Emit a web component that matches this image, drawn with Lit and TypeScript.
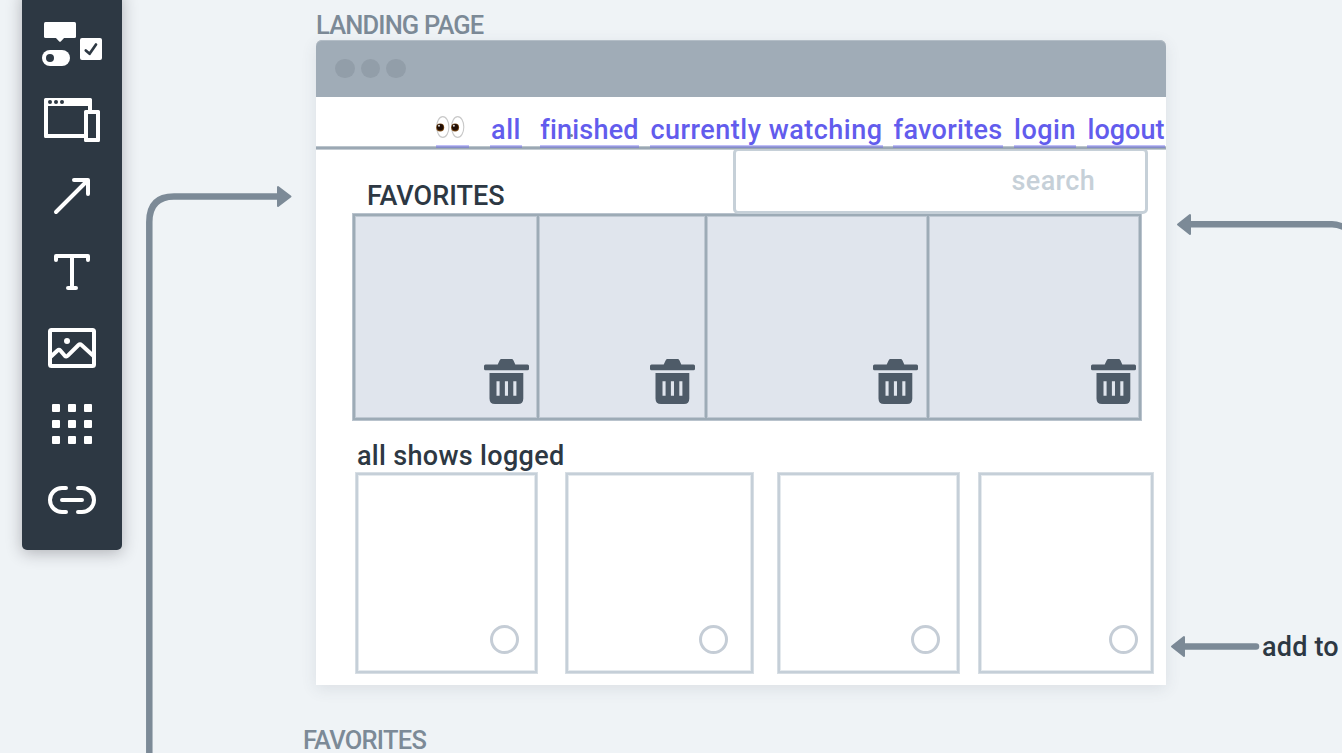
import { LitElement, html, css, svg } from "lit";
import { customElement } from "lit/decorators.js";

const toolIcons = [
  svg`<g fill="#fff"><rect x="44" y="22" width="32" height="16" rx="1.5"/><path d="M55 37H65L61 41.2Q60 42.2 59 41.2Z"/><rect x="42" y="50" width="28" height="16" rx="8"/><rect x="80" y="38" width="22" height="22" rx="2"/></g><circle cx="50" cy="58" r="4" fill="#2d3843"/><path d="M85.8 50.5L89.6 53.8L96 44.5" fill="none" stroke="#2d3843" stroke-width="2.7" stroke-linecap="round" stroke-linejoin="round"/>`,
  svg`<path fill="#fff" fill-rule="evenodd" d="M45.5 98H90.5Q92 98 92 99.5V110H98.5Q100 110 100 111.5V140.5Q100 142 98.5 142H85.5Q84 142 84 140.5V138H45.5Q44 138 44 136.5V99.5Q44 98 45.5 98ZM48 106V134H84V111.5Q84 110 85.5 110H88V106ZM88 114V138H96V114Z"/><g fill="#2d3843"><circle cx="50" cy="102" r="2"/><circle cx="56" cy="102" r="2"/><circle cx="62" cy="102" r="2"/></g>`,
  svg`<path class="line" d="M56 212L87.5 180.5M74 180H88V194"/>`,
  svg`<path class="line" d="M56 260V256H88V260M72 256V288M68 288H76"/>`,
  svg`<rect class="line" x="50" y="330" width="44" height="36" rx="1.5"/><circle cx="67" cy="341" r="3" fill="#fff"/><path class="line" d="M50.5 357L57.5 350.5Q59 349.2 60.5 350.7L64.8 355.8Q66.2 357.3 67.8 355.7L78.5 345Q80 343.5 81.5 345L93.5 356"/>`,
  svg`<g fill="#fff">${[404, 420, 436].map((y) => [52, 68, 84].map((x) => svg`<rect x=${x} y=${y} width="8" height="8" rx="1"/>`))}</g>`,
  svg`<path class="line" d="M66 488H62A12 12 0 0 0 62 512H66M78 488H82A12 12 0 0 1 82 512H78M62 500H82"/>`,
];

const trash = html`<svg width="45" height="45" viewBox="0 0 45 45">
  <path fill="#4e5b68" fill-rule="evenodd" d="M13.7 5.4L15.6 1.4Q16.2 0 17.6 0H27.5Q28.9 0 29.5 1.4L31.3 5.4H43.5Q45 5.4 45 6.9V9.800Q45 11.3 43.5 11.3H1.5Q0 11.3 0 9.8V6.9Q0 5.4 1.5 5.4ZM5.5 14H39.3V39.5Q39.3 45 34 45H11Q5.5 45 5.5 39.5ZM12.5 22.2V36.8H15.6V22.2ZM20.9 22.2V36.8H24V22.2ZM29.3 22.2V36.8H32.4V22.2Z"/>
</svg>`;

@customElement("app-root")
export class AppRoot extends LitElement {
  static styles = css`
    :host {
      display: block;
      position: relative;
      width: 1342px;
      height: 753px;
      overflow: hidden;
      background: #eff3f6;
      font: 500 27px/32px Roboto, sans-serif;
      color: #2d3843;
      white-space: nowrap;
    }
    * { box-sizing: border-box; }
    svg { display: block; flex: none; }
    .tools {
      position: absolute;
      left: 22px;
      top: -10px;
      width: 100px;
      height: 560px;
      padding-top: 16px;
      display: flex;
      flex-direction: column;
      align-items: center;
      background: #2d3843;
      border-radius: 5px;
      box-shadow: 0 3px 16px rgba(45, 40, 50, 0.32);
    }
    .line { fill: none; stroke: #fff; stroke-width: 4; stroke-linecap: round; stroke-linejoin: round; }
    .wires { position: absolute; inset: 0; }
    .note { position: absolute; }
    .frame-name { color: #7c8a97; font-size: 25.5px; line-height: 26px; }
    .landing { left: 316px; top: 12px; letter-spacing: -0.85px; }
    .next { left: 303px; top: 727px; letter-spacing: -0.75px; }
    .add { left: 1262px; top: 631px; letter-spacing: 0.2px; }
    .page {
      position: absolute;
      left: 316px;
      top: 40px;
      width: 850px;
      height: 645px;
      background: #fff;
      border-radius: 6px 6px 0 0;
      box-shadow: 0 4px 16px rgba(60, 75, 90, 0.11);
    }
    .bar {
      height: 57px;
      padding: 0 19px;
      display: flex;
      align-items: center;
      gap: 6px;
      background: #a0acb7;
      border-radius: 6px 6px 0 0;
      box-shadow: inset 0 1px #b3bdc6;
    }
    .bar i { width: 19.5px; height: 19.5px; border-radius: 50%; background: #929ea9; }
    nav {
      position: relative;
      z-index: 1;
      height: 53px;
      padding-left: 120px;
      display: flex;
      background: linear-gradient(#bac4cc 0 1px, #9ba8b3 1px 3px, #c3cbd2 3px) bottom / 100% 4px no-repeat;
    }
    nav a {
      height: 51px;
      padding-top: 17px;
      display: flex;
      justify-content: center;
      color: #625ced;
      border-bottom: 3px solid rgba(98, 92, 237, 0.4);
    }
    .eyes { width: 33px; margin-right: 21px; }
    .all { width: 32px; margin-right: 18px; letter-spacing: 0.5px; }
    .finished { width: 99px; margin-right: 11px; letter-spacing: 0.2px; }
    .watching { width: 233px; margin-right: 10px; letter-spacing: 0.5px; }
    .favs { width: 110px; margin-right: 11px; letter-spacing: 0.3px; }
    .login { width: 62px; margin-right: 11px; letter-spacing: 0.5px; }
    .logout { width: 78px; }
    .head { height: 63px; display: flex; }
    h2, h3 { font: inherit; margin: 0; }
    h2 { margin: 30px 0 0 51px; width: 140px; }
    .search {
      width: 415px;
      height: 66px;
      margin: -2px 0 0 226px;
      padding: 14px 50px 0 0;
      border: 3px solid #c6d0d8;
      border-radius: 5px;
      background: #fff;
      color: #c6d0d8;
      text-align: right;
      letter-spacing: 0.35px;
    }
    .favorites {
      margin-left: 36px;
      width: 790px;
      height: 208px;
      display: grid;
      grid-template-columns: 188px 168px 222px 212px;
      background: #e0e5ed;
      box-shadow: inset 0 0 0 1px #b9c3cd, inset 0 0 0 3px #9dabb6, inset 0 0 0 4px #bfc8d2;
    }
    .cell {
      margin: 3px 0;
      display: flex;
      justify-content: flex-end;
      align-items: flex-end;
      padding: 0 11px 14px 0;
      box-shadow: inset -1px 0 #bfc8d2, inset -3px 0 #9dabb6, inset -4px 0 #bfc8d2;
    }
    .cell:nth-child(2) { padding-right: 13px; }
    .cell:nth-child(3) { padding-right: 12px; }
    .cell:nth-child(4) { padding-right: 6px; box-shadow: none; }
    h3 { padding: 19px 0 0 41px; height: 51px; letter-spacing: 0.32px; }
    .shows { margin-left: 39px; height: 202px; display: flex; }
    .show {
      display: flex;
      justify-content: flex-end;
      align-items: flex-end;
      padding-bottom: 20px;
      box-shadow: inset 0 0 0 1px #d7dee4, inset 0 0 0 3px #c5cfd8, inset 0 0 0 4px #e5eaee;
    }
    .show i { width: 29px; height: 29px; border: 3px solid #c5cdd6; border-radius: 50%; }
    .one { width: 183px; margin-right: 27px; padding-right: 19px; }
    .two { width: 189px; margin-right: 23px; padding-right: 26px; }
    .three { width: 183px; margin-right: 18px; padding-right: 20px; }
    .four { width: 176px; padding-right: 16px; }
    .dot { position: absolute; left: 570px; top: 134px; width: 3px; height: 3px; border-radius: 50%; background: #7c8a97; }
  `;

  render() {
    return html`
      <svg class="wires" width="1342" height="753" viewBox="0 0 1342 753">
        <g fill="none" stroke="#7c8a97" stroke-width="6.5">
          <path d="M149.3 756V222Q149.3 196.5 174 196.5H279"/>
          <path d="M1188 224.3H1332Q1338 224.3 1346 228"/>
          <path d="M1182 646.5H1256" stroke-linecap="round"/>
        </g>
        <g fill="#7c8a97" stroke="#7c8a97" stroke-width="2" stroke-linejoin="round">
          <path d="M278 187V206L290.5 196.5Z"/>
          <path d="M1190 215V234L1178 224.5Z"/>
          <path d="M1184 637V656L1172 646.5Z"/>
        </g>
      </svg>
      <aside class="tools">
        ${toolIcons.map((icon, i) => html`<svg width="76" height="76" viewBox=${`34 ${6 + 76 * i} 76 76`}>${icon}</svg>`)}
      </aside>
      <div class="note frame-name landing">LANDING PAGE</div>
      <section class="page">
        <div class="bar"><i></i><i></i><i></i></div>
        <nav>
          <a class="eyes"><svg width="33" height="30" viewBox="436 114 33 30">
            <g fill="#fff" stroke="#c9c9c9" stroke-width="1.1"><ellipse cx="442.8" cy="127" rx="6.1" ry="10.4"/><ellipse cx="457.7" cy="127" rx="6.1" ry="10.4"/></g>
            <g fill="#7b4a16"><circle cx="440.2" cy="127.5" r="4"/><circle cx="455.1" cy="127.5" r="4"/></g>
            <g fill="#210e05"><circle cx="440.2" cy="127.2" r="3.2"/><circle cx="455.1" cy="127.2" r="3.2"/></g>
            <g fill="#ddd"><circle cx="439" cy="125.7" r="1"/><circle cx="453.9" cy="125.7" r="1"/></g>
          </svg></a>
          <a class="all">all</a>
          <a class="finished">finished</a>
          <a class="watching">currently watching</a>
          <a class="favs">favorites</a>
          <a class="login">login</a>
          <a class="logout">logout</a>
        </nav>
        <div class="head"><h2>FAVORITES</h2><div class="search">search</div></div>
        <div class="favorites">${[0, 1, 2, 3].map(() => html`<div class="cell">${trash}</div>`)}</div>
        <h3>all shows logged</h3>
        <div class="shows">${["one", "two", "three", "four"].map((n) => html`<div class="show ${n}"><i></i></div>`)}</div>
      </section>
      <i class="dot"></i>
      <div class="note add">add to</div>
      <div class="note frame-name next">FAVORITES</div>
    `;
  }
}
